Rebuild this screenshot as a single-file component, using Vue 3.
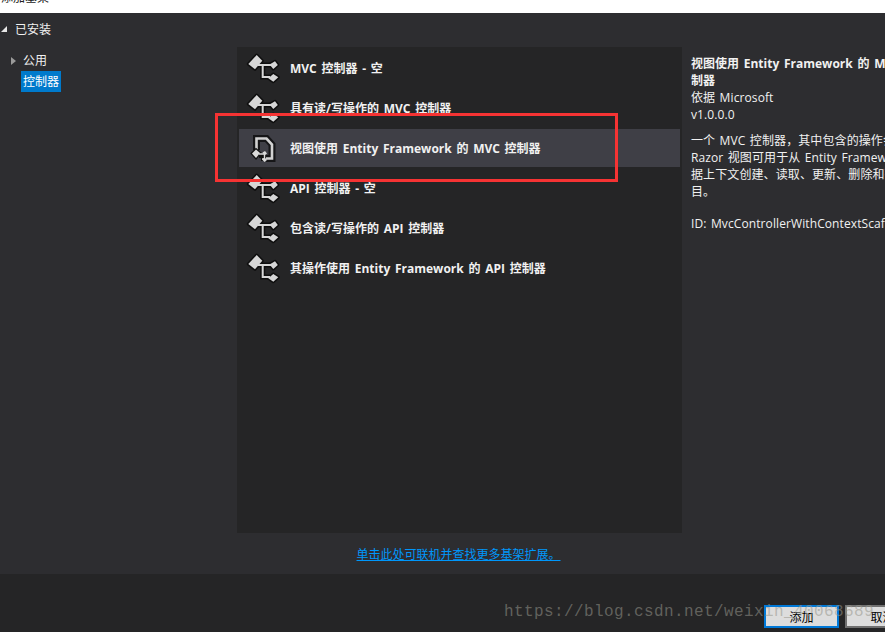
<template>
	<div class="dialog">
		<div class="titlebar"><span>添加基架</span></div>
		<div class="body">
			<div class="tree">
				<div class="tree-root">
					<span class="tri-open"></span>
					<span>已安装</span>
				</div>
				<div class="tree-item tree-first">
					<span class="tri-closed"></span>
					<span class="tree-label">公用</span>
				</div>
				<div class="tree-item">
					<span class="tree-label selected">控制器</span>
				</div>
			</div>
			<div class="center">
				<div class="list">
					<div v-for="item in items" :key="item.name" class="row" :class="{ active: item.active }">
						<svg v-if="item.active" class="icon" viewBox="0 0 50 38" width="50" height="38">
							<path d="M17.5 21V9.5H27.5L33 15.5V29.5H27" fill="none" stroke="#161618" stroke-width="7" />
							<path d="M17.5 21V9.5H27.5L33 15.5V29.5H27" fill="none" stroke="#d2d2d2" stroke-width="2.6" />
							<path d="M20 27H27M24 27V32" stroke="#111" stroke-width="4" fill="none" />
							<path d="M13 24.5L17 20.5L21 24L17 29Z" fill="#dadada" stroke="#111" stroke-width="2.5" paint-order="stroke" />
							<path d="M20 25H25.5V30H23" fill="none" stroke="#dadada" stroke-width="1.4" />
							<path d="M23.5 23.5L26 22L28 24.5L25.5 26.5Z" fill="#dadada" />
							<path d="M23 30.5L25.5 28.5L28 31L25.5 33Z" fill="#dadada" />
						</svg>
						<svg v-else class="icon" viewBox="0 0 50 38" width="50" height="38">
							<path d="M19 16H32M23.7 16V28H31" stroke="#0e0e0e" stroke-width="5" fill="none" />
							<g fill="#d6d6d6" stroke="#0e0e0e" stroke-width="3" paint-order="stroke" stroke-linejoin="round">
								<path d="M9.3 15L17.7 6L23.3 11.7L16 20.3Z" />
								<path d="M30.5 15.5L36 12.2L38.8 16L34.3 20Z" />
								<path d="M29.3 29.3L34.3 25L39.3 28.3L34.3 32.7Z" />
							</g>
							<path d="M19 16H32M23.7 16V28H31" stroke="#d6d6d6" stroke-width="2" fill="none" />
						</svg>
						<span class="row-name">{{ item.name }}</span>
					</div>
				</div>
				<div class="more">
					<a class="more-link">单击此处可联机并查找更多基架扩展。</a>
				</div>
			</div>
			<div class="details">
				<div class="details-title">视图使用 Entity Framework 的 MVC 控制器</div>
				<div class="details-title">制器</div>
				<div>依据 Microsoft</div>
				<div>v1.0.0.0</div>
				<div class="para">
					<div>一个 MVC 控制器，其中包含的操作会使用 Razor 视图</div>
					<div>Razor 视图可用于从 Entity Framework 数据库</div>
					<div>据上下文创建、读取、更新、删除和列出实体的项</div>
					<div>目。</div>
				</div>
				<div class="id-line">ID: MvcControllerWithContextScaffolder</div>
			</div>
		</div>
		<div class="footer">
			<button class="btn primary">添加</button>
			<button class="btn">取消</button>
		</div>
		<div class="callout"></div>
		<div class="watermark">https://blog.csdn.net/weixin_40068689</div>
	</div>
</template>

<script setup>
const items = [
	{ name: 'MVC 控制器 - 空' },
	{ name: '具有读/写操作的 MVC 控制器' },
	{ name: '视图使用 Entity Framework 的 MVC 控制器', active: true },
	{ name: 'API 控制器 - 空' },
	{ name: '包含读/写操作的 API 控制器' },
	{ name: '其操作使用 Entity Framework 的 API 控制器' },
];
</script>

<style>
html,
body {
	margin: 0;
	overflow: hidden;
}
</style>

<style scoped>
.dialog {
	position: relative;
	width: 885px;
	height: 632px;
	overflow: hidden;
	display: flex;
	flex-direction: column;
	background: #2d2d30;
	color: #f1f1f1;
	font-family: "Open Sans", "Noto Sans CJK SC", sans-serif;
	font-size: 12px;
}

.titlebar {
	flex: none;
	height: 13px;
	overflow: hidden;
	background: #fff;
	color: #222;
	padding-left: 1px;
}

.titlebar span {
	display: block;
	line-height: 12px;
	margin-top: -8px;
}

.body {
	flex: none;
	height: 561px;
	display: flex;
}

.tree {
	flex: none;
	width: 237px;
	padding-top: 7px;
	box-sizing: border-box;
}

.tree-root {
	display: flex;
	align-items: center;
	height: 17px;
	padding-left: 1px;
	gap: 8px;
}

.tri-open {
	width: 0;
	height: 0;
	border-style: solid;
	border-width: 0 0 6px 6px;
	border-color: transparent transparent #e8e8e8 transparent;
}

.tri-closed {
	width: 0;
	height: 0;
	border-style: solid;
	border-width: 4px 0 4px 5px;
	border-color: transparent transparent transparent #9a9a9a;
	margin-right: 5px;
}

.tree-item {
	display: flex;
	align-items: center;
	height: 21px;
	padding-left: 11px;
}

.tree-first {
	margin-top: 13px;
}

.tree-label {
	padding: 0 2px;
	line-height: 21px;
}

.selected {
	background: #007acc;
	color: #fff;
	margin-left: 10px;
}

.center {
	flex: none;
	width: 445px;
	padding-top: 34px;
	box-sizing: border-box;
	display: flex;
	flex-direction: column;
}

.list {
	height: 486px;
	background: #252526;
	padding: 2px;
	box-sizing: border-box;
}

.row {
	display: flex;
	align-items: center;
	height: 38px;
	margin-bottom: 2px;
	font-weight: 700;
	word-spacing: 1.6px;
}

.row.active {
	background: #3f3f46;
}

.icon {
	flex: none;
	margin-right: 1px;
}

.more {
	flex: 1;
	display: flex;
	align-items: center;
	justify-content: center;
	padding-right: 2px;
}

.more-link {
	color: #0097fb;
	text-decoration: underline;
}

.details {
	flex: 1;
	min-width: 0;
	padding: 42px 0 0 9px;
	line-height: 17px;
	white-space: nowrap;
	overflow: hidden;
	letter-spacing: 0.1px;
	word-spacing: 1.2px;
}

.details-title {
	font-weight: 700;
	letter-spacing: 0;
	word-spacing: 1.6px;
}

.para {
	margin-top: 9px;
}

.id-line {
	margin-top: 15px;
}

.footer {
	flex: 1;
	background: #252526;
	display: flex;
	justify-content: flex-start;
	gap: 6px;
	padding: 31px 0 0 764px;
	box-sizing: border-box;
}

.btn {
	flex: none;
	width: 75px;
	height: 23px;
	padding: 0;
	border: 2px solid #707070;
	background: #dddddd;
	color: #000;
	font-family: inherit;
	font-size: 12px;
}

.btn.primary {
	border-color: #0078d7;
}

.callout {
	position: absolute;
	left: 215px;
	top: 113px;
	width: 403px;
	height: 69px;
	box-sizing: border-box;
	border: 3px solid #f63333;
}

.watermark {
	position: absolute;
	left: 504px;
	top: 603px;
	font-family: "Liberation Mono", monospace;
	font-size: 16px;
	letter-spacing: 0.4px;
	color: rgba(150, 150, 140, 0.55);
	white-space: nowrap;
}
</style>
